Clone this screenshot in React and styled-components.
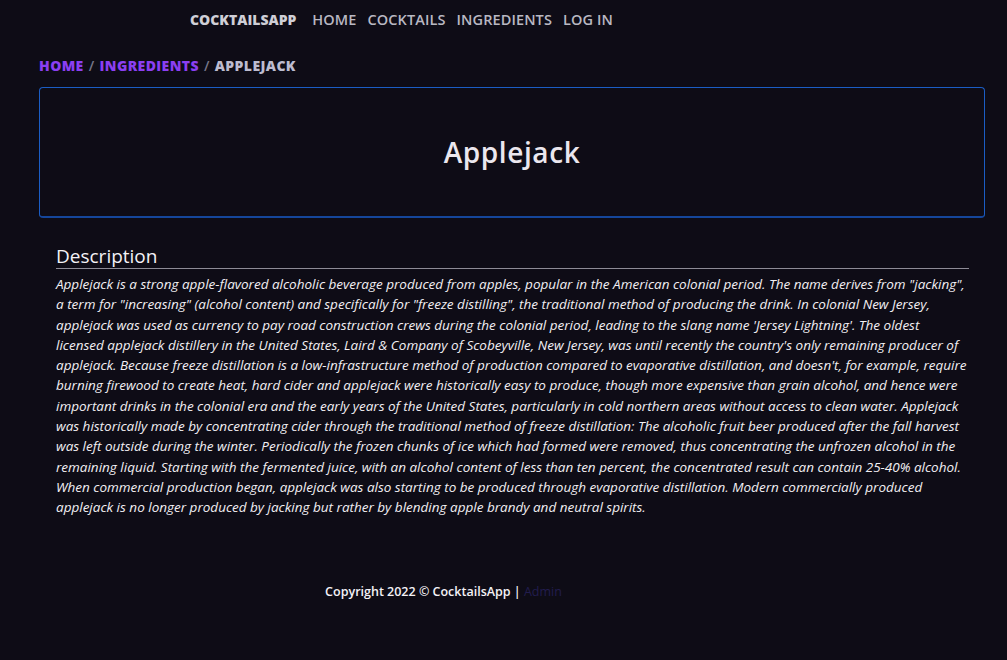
import React from 'react';
import styled, { createGlobalStyle } from 'styled-components';

const GlobalStyle = createGlobalStyle`
    body {
        margin: 0;
        background: #0e0c16;
        font-family: "Open Sans", "Noto Sans", sans-serif;
        color: #f2f0f4;
    }
`

const Page = styled.div`
    min-height: 660px;
    display: flex;
    flex-direction: column;
`

const Nav = styled.nav`
    height: 39px;
    display: flex;
    align-items: center;
    gap: 11px;
    padding-left: 190px;
`

const NavLink = styled.a`
    font-size: ${props => props.brand ? '14px' : '14.5px'};
    font-weight: ${props => props.brand ? 800 : 600};
    color: ${props => props.brand ? '#cfcfd6' : '#b9b8c2'};
    margin-right: ${props => props.brand ? '5px' : '0'};
    text-transform: uppercase;
    letter-spacing: ${props => props.brand ? '0px' : '0.1px'};
    text-decoration: none;
`

const Main = styled.main`
    padding: 0 22px 0 39px;
`

const Crumbs = styled.div`
    height: 48px;
    display: flex;
    align-items: center;
    gap: 5px;
    font-size: 14px;
    font-weight: 800;
    letter-spacing: 0.4px;
    text-transform: uppercase;
    padding-top: 5px;
    box-sizing: border-box;
`

const Crumb = styled.a`
    color: ${props => props.active ? '#bdbcd0' : '#8b3ff2'};
    text-decoration: none;
`

const Slash = styled.span`
    color: #77778a;
    font-weight: 600;
`

const TitleBox = styled.div`
    height: 131px;
    box-sizing: border-box;
    border: 1px solid #1b5dc4;
    border-bottom: 2px solid #15469a;
    border-radius: 4px;
    display: flex;
    align-items: center;
    justify-content: center;
`

const Title = styled.h1`
    margin: 0;
    font-size: 28px;
    font-weight: 600;
    letter-spacing: 0.6px;
    color: #ebe7ee;
`

const Section = styled.section`
    padding: 27px 16px 0 17px;
`

const SectionHeader = styled.h2`
    margin: 0;
    font-size: 19px;
    font-weight: 500;
    line-height: 23px;
    border-bottom: 1px solid #8d8b96;
    color: #f4f2f6;
`

const Text = styled.p`
    margin: 5px 0 0;
    font-size: 13.5px;
    font-style: italic;
    line-height: 20.3px;
    color: #f2eff3;
`

const Line = styled.span`
    display: block;
    white-space: nowrap;
`

const Footer = styled.footer`
    margin-top: 65px;
    padding-right: 120px;
    text-align: center;
    font-size: 12.5px;
    font-weight: 600;
    color: #f4f2f6;
`

const AdminLink = styled.a`
    color: #221d4e;
    text-decoration: none;
    font-weight: 500;
`

const lines = [
    'Applejack is a strong apple-flavored alcoholic beverage produced from apples, popular in the American colonial period. The name derives from "jacking",',
    'a term for "increasing" (alcohol content) and specifically for "freeze distilling", the traditional method of producing the drink. In colonial New Jersey,',
    "applejack was used as currency to pay road construction crews during the colonial period, leading to the slang name 'Jersey Lightning'. The oldest",
    "licensed applejack distillery in the United States, Laird & Company of Scobeyville, New Jersey, was until recently the country's only remaining producer of",
    "applejack. Because freeze distillation is a low-infrastructure method of production compared to evaporative distillation, and doesn't, for example, require",
    'burning firewood to create heat, hard cider and applejack were historically easy to produce, though more expensive than grain alcohol, and hence were',
    'important drinks in the colonial era and the early years of the United States, particularly in cold northern areas without access to clean water. Applejack',
    'was historically made by concentrating cider through the traditional method of freeze distillation: The alcoholic fruit beer produced after the fall harvest',
    'was left outside during the winter. Periodically the frozen chunks of ice which had formed were removed, thus concentrating the unfrozen alcohol in the',
    'remaining liquid. Starting with the fermented juice, with an alcohol content of less than ten percent, the concentrated result can contain 25-40% alcohol.',
    'When commercial production began, applejack was also starting to be produced through evaporative distillation. Modern commercially produced',
    'applejack is no longer produced by jacking but rather by blending apple brandy and neutral spirits.',
]

function App() {
    return (
        <Page>
            <GlobalStyle />
            <Nav>
                <NavLink brand href="#">CocktailsApp</NavLink>
                <NavLink href="#">Home</NavLink>
                <NavLink href="#">Cocktails</NavLink>
                <NavLink href="#">Ingredients</NavLink>
                <NavLink href="#">Log in</NavLink>
            </Nav>

            <Main>
                <Crumbs>
                    <Crumb href="#">Home</Crumb>
                    <Slash>/</Slash>
                    <Crumb href="#">Ingredients</Crumb>
                    <Slash>/</Slash>
                    <Crumb active href="#">Applejack</Crumb>
                </Crumbs>

                <TitleBox>
                    <Title>Applejack</Title>
                </TitleBox>

                <Section>
                    <SectionHeader>Description</SectionHeader>
                    <Text>
                        {lines.map((line, i) => <Line key={i}>{line}</Line>)}
                    </Text>
                </Section>
            </Main>

            <Footer>
                Copyright 2022 © CocktailsApp | <AdminLink href="#">Admin</AdminLink>
            </Footer>
        </Page>
    );
}

export default App;
